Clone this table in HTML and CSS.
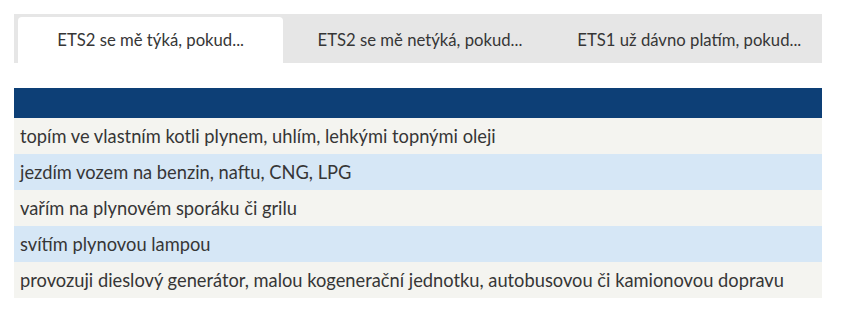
FILE: index.html
```html
<!DOCTYPE html>
<html lang="cs">
<head>
<meta charset="utf-8">
<link rel="stylesheet" href="styles.css">
</head>
<body>
<div class="wrap">
  <div class="tabs">
    <div class="tab active">ETS2 se mě týká, pokud...</div>
    <div class="tab">ETS2 se mě netýká, pokud...</div>
    <div class="tab">ETS1 už dávno platím, pokud...</div>
  </div>
  <div class="table">
    <div class="head"></div>
    <div class="row odd">topím ve vlastním kotli plynem, uhlím, lehkými topnými oleji</div>
    <div class="row even">jezdím vozem na benzin, naftu, CNG, LPG</div>
    <div class="row odd">vařím na plynovém sporáku či grilu</div>
    <div class="row even">svítím plynovou lampou</div>
    <div class="row odd">provozuji dieslový generátor, malou kogenerační jednotku, autobusovou či kamionovou dopravu</div>
  </div>
</div>
</body>
</html>
```

FILE: styles.css
```css
html, body {
  margin: 0;
  padding: 0;
  background: #ffffff;
}
.wrap {
  padding: 14px 24px 0 14px;
  font-family: "Lato", "Open Sans", sans-serif;
  color: #363636;
}
.tabs {
  display: grid;
  grid-template-columns: 1fr 1fr 1fr;
  column-gap: 4px;
  padding: 3px 0 0 4px;
  background: #e6e6e6;
}
.tab {
  height: 46px;
  display: flex;
  align-items: center;
  justify-content: center;
  font-size: 16.7px;
  color: #363636;
}
.tab.active {
  background: #ffffff;
  border-radius: 4px 4px 0 0;
}
.table {
  margin-top: 25px;
}
.head {
  height: 30px;
  background: #0d3f76;
}
.row {
  height: 36px;
  display: flex;
  align-items: center;
  padding-left: 6px;
  font-size: 18.3px;
  color: #363636;
}
.row.odd {
  background: #f4f4f0;
}
.row.even {
  background: #d6e7f6;
}
```
